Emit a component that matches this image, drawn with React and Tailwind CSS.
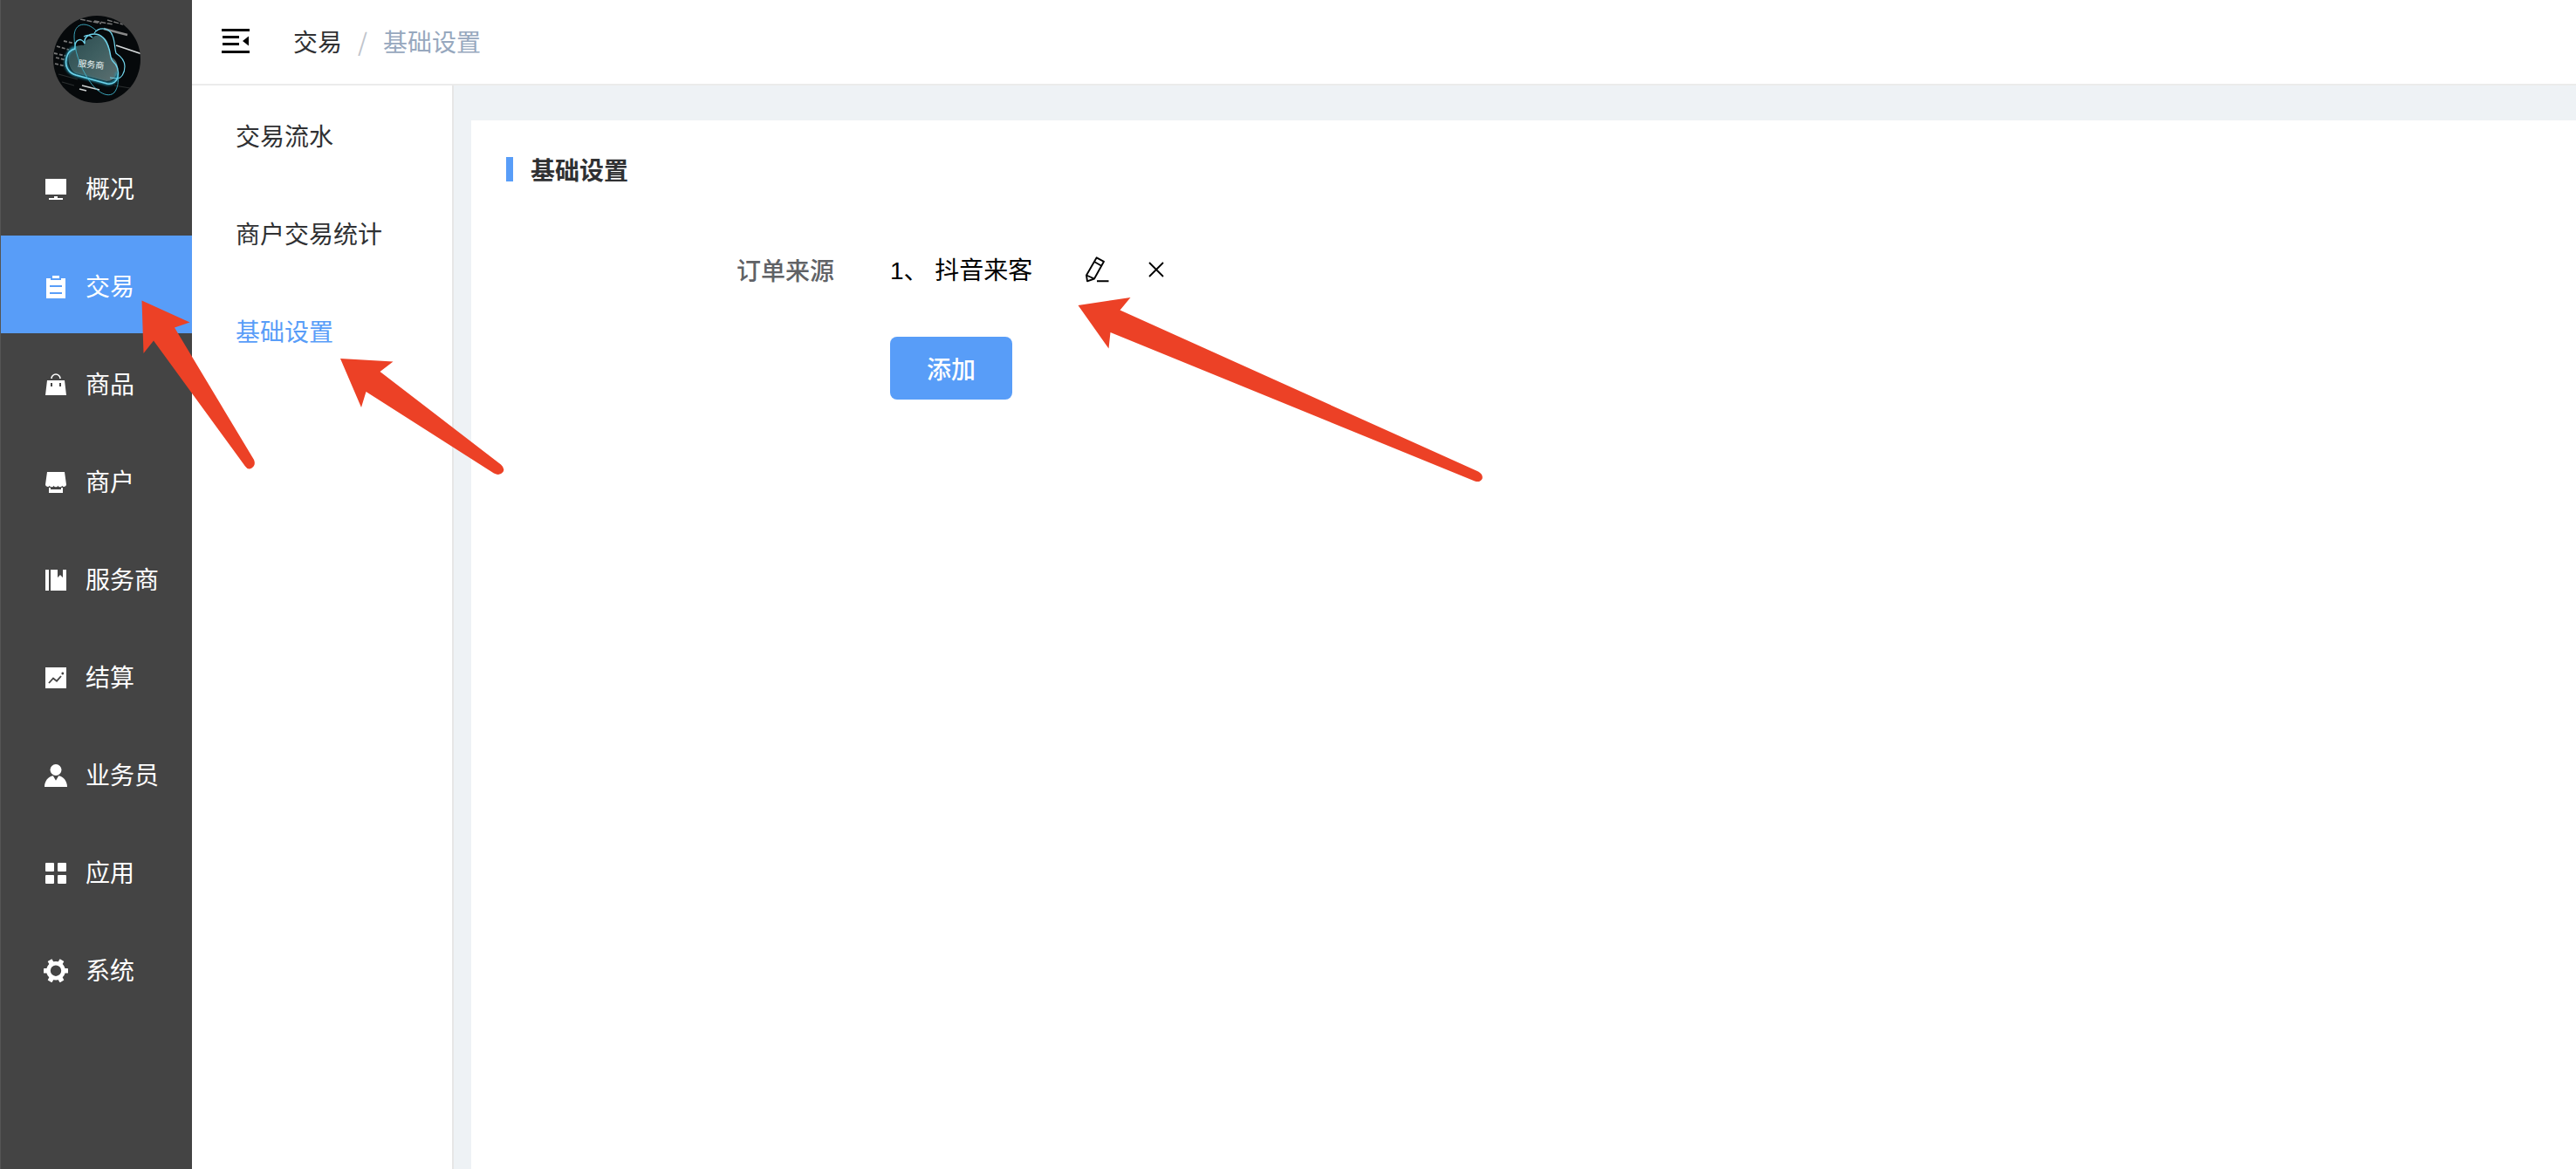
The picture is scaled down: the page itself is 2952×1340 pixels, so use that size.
const menu = [
  { label: '概况', icon: PlatformIcon },
  { label: '交易', icon: OrderIcon, active: true },
  { label: '商品', icon: GoodsIcon },
  { label: '商户', icon: ShopIcon },
  { label: '服务商', icon: BookIcon },
  { label: '结算', icon: ChartIcon },
  { label: '业务员', icon: PersonIcon },
  { label: '应用', icon: AppsIcon },
  { label: '系统', icon: GearIcon },
];

const subMenu = [
  { label: '交易流水' },
  { label: '商户交易统计' },
  { label: '基础设置', active: true },
];

function Icon({ children }) {
  return (
    <svg viewBox="0 0 32 32" className="size-8 shrink-0" fill="currentColor" aria-hidden="true">
      {children}
    </svg>
  );
}

function PlatformIcon() {
  return (
    <Icon>
      <path d="M4 7h24v18H4zM14 27h4v2h6v2H8v-2h6z" />
    </Icon>
  );
}

function OrderIcon() {
  return (
    <Icon>
      <path fillRule="evenodd" d="M12 6h8v3h-8zM5 9h5v2h12V9h5v23H5zM9 17v2h14v-2zM9 25v2h14v-2z" />
    </Icon>
  );
}

function GoodsIcon() {
  return (
    <Icon>
      <path fillRule="evenodd" d="M6 14h20l2 17H4zM10 17v4h2v-4zM20 17v4h2v-4z" />
      <path d="M11 12a5 5 0 0 1 10 0" fill="none" stroke="currentColor" strokeWidth="1.6" />
    </Icon>
  );
}

function ShopIcon() {
  return (
    <Icon>
      <path d="M6 7h20l2 14.500a2.600 2.600 0 0 1-4.800 1.200a2.600 2.600 0 0 1-4.800 0a2.600 2.600 0 0 1-4.800 0a2.600 2.600 0 0 1-4.800 0A2.600 2.600 0 0 1 4 21.500z" />
      <path d="M8 25h2v2h12v-2h2v6H8z" />
    </Icon>
  );
}

function BookIcon() {
  return (
    <Icon>
      <path d="M4 7h4v24H4zM10 7h8v9l3-3 3 3V7h4v24H10z" />
    </Icon>
  );
}

function ChartIcon() {
  return (
    <Icon>
      <path d="M4 7h24v24H4z" />
      <path d="M8 25l5-5.500 4 3.200 5-5.700" fill="none" stroke="#444" strokeWidth="1.800" />
      <circle cx="23.800" cy="14" r="1.400" fill="#444" />
    </Icon>
  );
}

function PersonIcon() {
  return (
    <Icon>
      <circle cx="16" cy="12.500" r="6.500" />
      <path d="M3 32C3 25.500 7 20.500 12.800 19.300L16 24.800l3.200-5.500C25 20.500 29 25.500 29 32z" />
    </Icon>
  );
}

function AppsIcon() {
  return (
    <Icon>
      <rect x="4" y="7" width="10" height="10" rx="1" />
      <rect x="18" y="7" width="10" height="10" rx="1" />
      <rect x="4" y="21" width="10" height="10" rx="1" />
      <rect x="18" y="21" width="10" height="10" rx="1" />
    </Icon>
  );
}

function GearIcon() {
  return (
    <Icon>
      <circle cx="16" cy="18.700" r="8.500" fill="none" stroke="currentColor" strokeWidth="4.600" />
      {[0, 60, 120, 180, 240, 300].map((angle) => (
        <rect key={angle} x="25" y="15.900" width="5" height="5.600" rx="0.600" transform={`rotate(${angle} 16 18.700)`} />
      ))}
    </Icon>
  );
}

function Logo() {
  return (
    <svg viewBox="0 0 100 100" className="size-[100px]" role="img" aria-label="服务商">
      <defs>
        <clipPath id="logo-clip">
          <circle cx="50" cy="50" r="50" />
        </clipPath>
        <linearGradient id="cloud-fill" x1="0" y1="0" x2="1" y2="1">
          <stop offset="0" stopColor="#2b4a4e" />
          <stop offset="0.500" stopColor="#3f5f61" />
          <stop offset="1" stopColor="#5d6f70" />
        </linearGradient>
        <filter id="glow" x="-20%" y="-20%" width="140%" height="140%">
          <feGaussianBlur stdDeviation="1.800" />
        </filter>
      </defs>
      <g clipPath="url(#logo-clip)">
        <rect width="100" height="100" fill="#06090b" />
        <g fill="none">
          <path d="M31 4l24 5M47 6l22 4M62 5l18 5" stroke="#777" strokeWidth="1.500" strokeDasharray="6 1.500" />
          <path d="M58 15l27 7" strokeWidth="2.400" stroke="#888" />
          <path d="M72 34l30 10" stroke="#d5d9da" strokeWidth="1.800" />
          <path d="M12 29l14 3M4 35l14 4M1 43l13 3M3 48l12 3M2 55l12 3" stroke="#777" strokeDasharray="4 2" strokeWidth="1.800" />
          <path d="M33 80l20 5M30 84l8 2" stroke="#cfd3d3" strokeWidth="1.800" />
          <path d="M6 67l22 6M70 80l24 4M10 76l14 4" stroke="#2b2f30" strokeWidth="1.200" />
        </g>
        <path
          d="M20 40c4-5 10-7 15-6c1-6 5-8 9-7c4-7 13-5 17 1c3 5 4 14 5 19c8 4 9 12 7 19c-2 6-6 9-12 9L26 66c-8-3-11-18-6-26z"
          fill="url(#cloud-fill)"
        />
        <path
          d="M26 36C14 40 12 56 18 63c2 3 5 4 8 5l36 10c8 0 12-5 11-13"
          fill="none"
          stroke="#2a9db8"
          strokeWidth="3"
          filter="url(#glow)"
        />
        <g fill="none" stroke="#6fd3ea">
          <path
            d="M36 32c-3-7-12-6-11 6C14 40 12 56 18 63c2 3 5 4 8 5l36 10c7 1 11-3 12-8c1-7 0-13-5-17c-4-3-3-9-5-15c-3-10-8-17-17-17c-7 0-12 4-11 11"
            strokeWidth="1.500"
          />
          <path d="M35 24c4-3 7-2 10 1M47 20c6-8 18-6 21 3c3 7 2 14 4 20c6 4 10 8 10 15c0 8-4 14-9 14l-8-1" strokeWidth="1.200" />
          <path d="M49 17C38 6 24 8 24 24c0 14 6 34 17 50c9 14 22 21 29 14c4-5 5-12 4-20" stroke="#3fb4cc" strokeWidth="0.900" />
        </g>
        <text x="28" y="58" fontSize="10" fill="#e8f1f1" transform="rotate(6 28 58)">
          服务商
        </text>
      </g>
    </svg>
  );
}

function FoldIcon() {
  return (
    <svg viewBox="0 -1 32 32" className="size-8" aria-hidden="true">
      <path d="M0 1h32v3H0zM1 9h19v3H1zM1 17h19v3H1zM0 26h32v3H0zM31 9.500v11L24 15z" />
    </svg>
  );
}

function EditIcon() {
  return (
    <svg viewBox="0 0 30 32" className="h-8 w-[30px]" fill="none" stroke="#000" strokeWidth="1.900" strokeLinejoin="round" aria-hidden="true">
      <path d="M14.700 2.300L23 6.800 12 26.500 4 29.300 3 22.500zM12 7l8.300 4.800M3 22.500l9 4M15 29.300H28.500" />
    </svg>
  );
}

function CloseIcon() {
  return (
    <svg viewBox="0 0 18 18" className="size-[18px]" stroke="#000" strokeWidth="1.800" aria-hidden="true">
      <path d="M1 1l16 16M17 1L1 17" />
    </svg>
  );
}

function PointerArrows() {
  return (
    <svg viewBox="0 0 1720 580" className="pointer-events-none absolute top-0 left-0 h-[580px] w-[1720px]" fill="#ec4126" aria-hidden="true">
      <path d="M162.500 344.500L217.500 369.500L200 375.500L291 527Q293.500 533 288.500 536.500Q284 539 281 534.500L176 390.500L164.500 405z" />
      <path d="M390 411L450.500 414.500L435.500 426L574 532.500Q579 537 576.500 541Q572.500 546 566 542.500L419.500 449L414 467z" />
      <path d="M1235.500 350L1295.500 341L1283.500 355.500L1694 540.500Q1700 544 1698.500 549Q1696 553.500 1690 551.500L1272.500 381L1270.500 399.500z" />
    </svg>
  );
}

export default function App() {
  return (
    <div className="relative flex min-h-screen bg-white font-['Noto_Sans_CJK_SC',sans-serif] text-[28px] leading-10 text-[#303133]">
      <aside className="w-[220px] shrink-0 border-l border-[#555] bg-[#444]">
        <div className="flex h-[158px] justify-center pt-[18px]">
          <Logo />
        </div>
        <nav aria-label="主菜单">
          {menu.map(({ label, icon: ItemIcon, active }) => (
            <a
              key={label}
              href="#"
              aria-current={active ? 'page' : undefined}
              className={`flex h-28 items-center gap-[18px] pl-[47px] text-white ${active ? 'bg-[#589df8]' : ''}`}
            >
              <ItemIcon />
              <span className="pt-0.5">{label}</span>
            </a>
          ))}
        </nav>
      </aside>

      <div className="flex min-w-0 flex-1 flex-col">
        <header className="flex h-[98px] items-center border-b-2 border-[#ebebeb] pb-0.5 pl-[34px]">
          <button type="button" aria-label="收起菜单">
            <FoldIcon />
          </button>
          <nav aria-label="面包屑" className="ml-[50px] flex items-center">
            <a href="#">交易</a>
            <span className="mx-[18px] text-[#c0c4cc]">/</span>
            <span className="text-[#97a8be]">基础设置</span>
          </nav>
        </header>

        <div className="flex flex-1">
          <nav aria-label="交易菜单" className="w-[300px] shrink-0 border-r-2 border-[#e6e6e6]">
            {subMenu.map(({ label, active }) => (
              <a
                key={label}
                href="#"
                aria-current={active ? 'page' : undefined}
                className={`flex h-28 items-center pt-0.5 pl-[50px] ${active ? 'text-[#589df8]' : ''}`}
              >
                {label}
              </a>
            ))}
          </nav>

          <main className="flex flex-1 flex-col bg-[#eef2f5] pt-10 pl-5">
            <section className="flex-1 bg-white px-10 pt-9">
              <h1 className="flex items-center gap-5 font-bold">
                <span className="h-7 w-2 bg-[#589df8]" />
                基础设置
              </h1>
              <div className="mt-[55px] flex">
                <div className="w-[440px] shrink-0 pr-16 text-right leading-20 font-medium text-[#606266]">
                  订单来源
                </div>
                <div>
                  <div className="flex h-20 items-center text-black">
                    <div>
                      <span className="font-['Liberation_Sans','Noto_Sans_CJK_SC',sans-serif]">1、 抖音来客</span>
                    </div>
                    <button type="button" aria-label="编辑" className="ml-[59px]">
                      <EditIcon />
                    </button>
                    <button type="button" aria-label="删除" className="ml-11">
                      <CloseIcon />
                    </button>
                  </div>
                  <button type="button" className="mt-[37px] h-[72px] rounded-lg bg-[#589df8] px-[42px] font-medium text-white">
                    添加
                  </button>
                </div>
              </div>
            </section>
          </main>
        </div>
      </div>

      <PointerArrows />
    </div>
  );
}
